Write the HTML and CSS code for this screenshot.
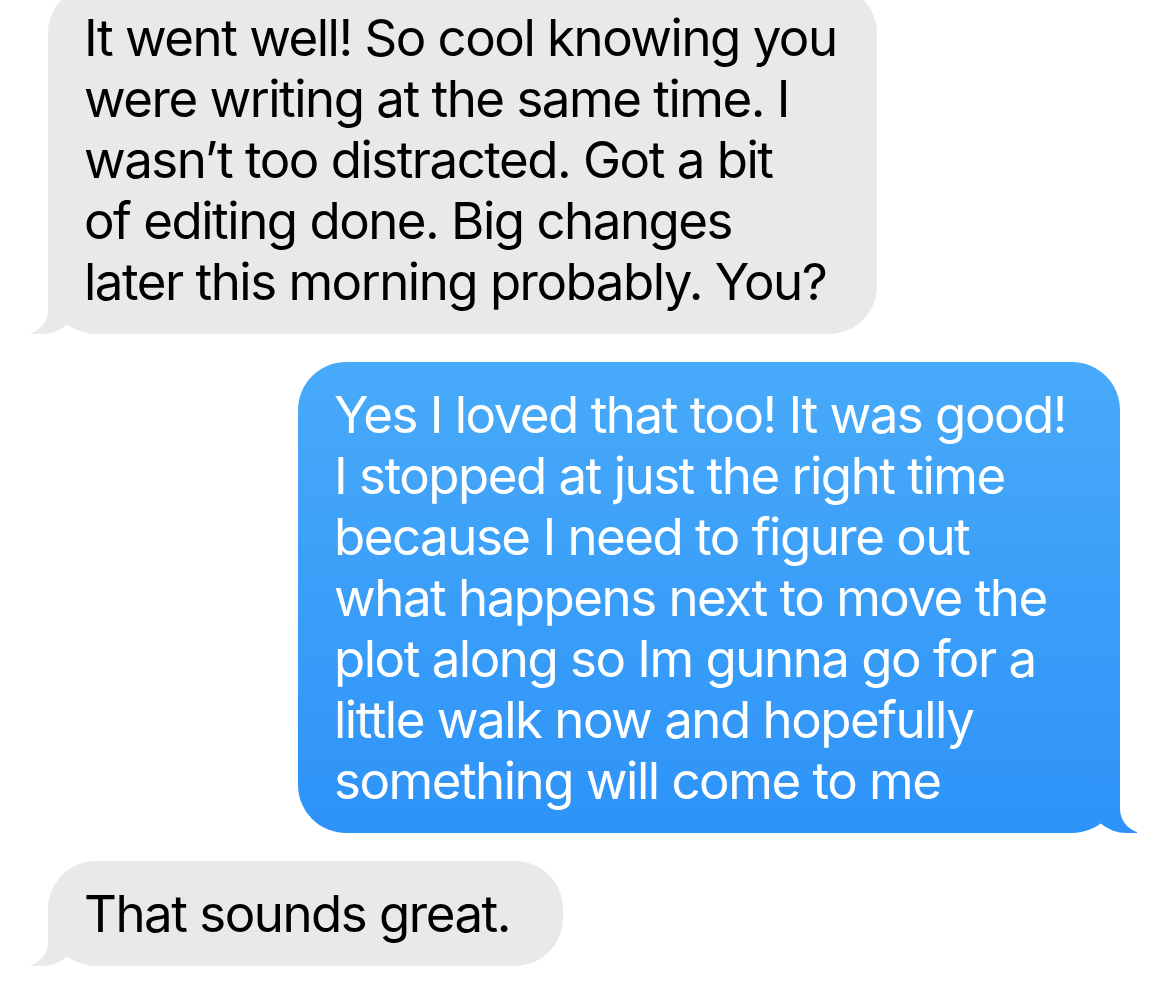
FILE: index.html
```html
<!DOCTYPE html>
<html lang="en">
<head>
    <meta charset="UTF-8">
    <meta name="viewport" content="width=device-width, initial-scale=1.0">
    <title>Messages</title>
    <link rel="stylesheet" href="styles.css">
</head>
<body>
    <main class="thread">
        <div class="bubble received wide">
            It went well! So cool knowing you<br>
            were writing at the same time. I<br>
            wasn’t too distracted. Got a bit<br>
            of editing done. Big changes<br>
            later this morning probably. You?
        </div>

        <div class="bubble sent">
            Yes I loved that too! It was good!<br>
            I stopped at just the right time<br>
            because I need to figure out<br>
            what happens next to move the<br>
            plot along so Im gunna go for a<br>
            little walk now and hopefully<br>
            something will come to me
        </div>

        <div class="bubble received short">
            That sounds great.
        </div>
    </main>
</body>
</html>
```

FILE: styles.css
```css
:root {
    --gray: #e9e9eb;
    --blue-top: #48aaf9;
    --blue-bottom: #2d93f8;
    --blue-tail: #3196f8;
    --background: #ffffff;
}

* {
    box-sizing: border-box;
    margin: 0;
    padding: 0;
}

body {
    background-color: var(--background);
    font-family: 'Inter', 'Roboto', 'Liberation Sans', sans-serif;
    overflow: hidden;
}

.thread {
    display: flex;
    flex-direction: column;
    gap: 28px;
    margin-top: -15px;
}

.bubble {
    position: relative;
    z-index: 0;
    padding: 22px 36px;
    border-radius: 48px;
    font-size: 51px;
    line-height: 61px;
    letter-spacing: -1.5px;
    white-space: nowrap;
}

/* tails */
.bubble::before,
.bubble::after {
    content: "";
    position: absolute;
    bottom: 0;
    height: 60px;
    z-index: -1;
}

.received {
    align-self: flex-start;
    margin-left: 48px;
    background-color: var(--gray);
    color: #000;
}

.received::before {
    left: -17px;
    width: 48px;
    background-color: var(--gray);
    border-bottom-right-radius: 38px 34px;
}

.received::after {
    left: -62px;
    width: 62px;
    background-color: var(--background);
    border-bottom-right-radius: 24px;
}

.received.wide {
    width: 829px;
}

.received.short {
    width: 515px;
}

.sent {
    align-self: flex-end;
    margin-right: 50px;
    width: 822px;
    background: linear-gradient(to bottom, var(--blue-top), var(--blue-bottom));
    color: #fff;
}

.sent::before {
    right: -17px;
    width: 48px;
    background: linear-gradient(to bottom, var(--blue-tail), var(--blue-bottom));
    border-bottom-left-radius: 38px 34px;
}

.sent::after {
    right: -62px;
    width: 62px;
    background-color: var(--background);
    border-bottom-left-radius: 24px;
}
```
